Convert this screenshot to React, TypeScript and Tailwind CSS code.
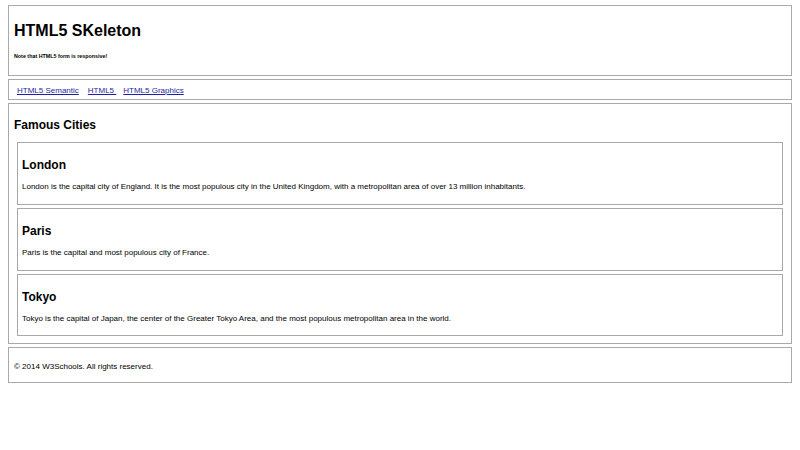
const cities = [
  {
    name: "London",
    text: "London is the capital city of England. It is the most populous city in the United Kingdom, with a metropolitan area of over 13 million inhabitants.",
    h: "h-[63px]",
  },
  {
    name: "Paris",
    text: "Paris is the capital and most populous city of France.",
    h: "h-[63px]",
  },
  {
    name: "Tokyo",
    text: "Tokyo is the capital of Japan, the center of the Greater Tokyo Area, and the most populous metropolitan area in the world.",
    h: "h-[62px]",
  },
];

export default function App() {
  return (
    <div className="h-[450px] bg-white px-2 pt-[5px] text-black font-['Liberation_Sans',Arial,sans-serif]">
      {/* header */}
      <header className="border border-[#a9a9a9] px-[5px] pt-[16px] pb-[16px]">
        <h1 className="text-[16px] leading-[18px] font-bold">HTML5 SKeleton</h1>
        <h6 className="mt-[13px] text-[5.35px] leading-[6px] font-bold">Note that HTML5 form is responsive!</h6>
      </header>

      {/* nav */}
      <nav className="mt-[3px] border border-[#a9a9a9] px-2 pt-[6px] pb-[4px] text-[8px] leading-[9px]">
        <a href="#" className="mr-[9px] text-[#1f1fa6] underline">HTML5 Semantic</a>
        <a href="#" className="mr-[7px] text-[#1f1fa6] underline">HTML5&nbsp;</a>
        <a href="#" className="text-[#1f1fa6] underline">HTML5 Graphics</a>
      </nav>

      {/* section */}
      <section className="mt-[3px] border border-[#a9a9a9] px-[5px] pt-[14px] pb-[7px]">
        <h2 className="text-[12px] leading-[14px] font-bold">Famous Cities</h2>
        <div className="mx-[3px] mt-[10px] flex flex-col gap-[3px]">
          {cities.map((city) => (
            <article key={city.name} className={`${city.h} border border-[#a9a9a9] px-1 pt-[15px]`}>
              <h2 className="text-[12px] leading-[14px] font-bold">{city.name}</h2>
              <p className="mt-[10px] text-[8px] leading-[9px]">{city.text}</p>
            </article>
          ))}
        </div>
      </section>

      {/* footer */}
      <footer className="mt-[3px] border border-[#a9a9a9] px-[5px] pt-[14px] pb-[11px] text-[8px] leading-[9px]">
        © 2014 W3Schools. All rights reserved.
      </footer>
    </div>
  );
}
